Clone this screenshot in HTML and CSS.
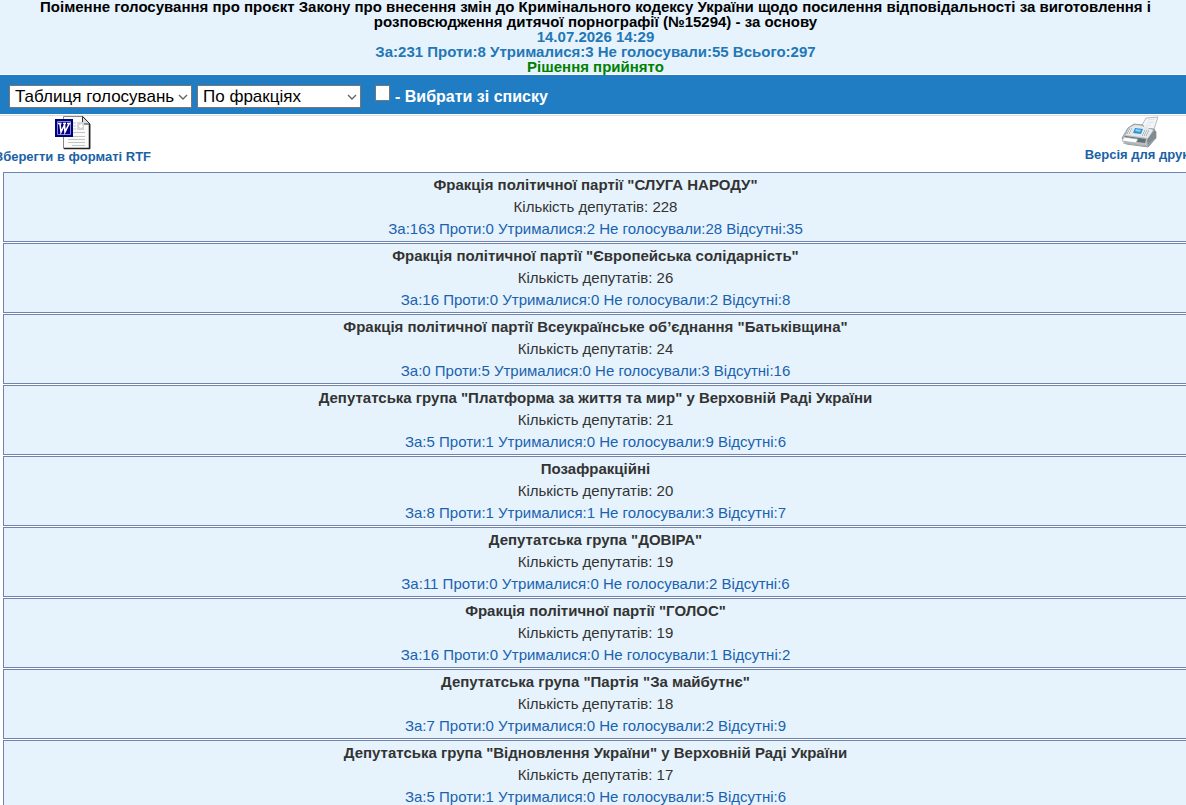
FILE: index.html
```
<!DOCTYPE html>
<html lang="uk">
<head>
<meta charset="utf-8">
<title>Поіменне голосування</title>
<link rel="stylesheet" href="styles.css">
</head>
<body>
<div class="page">
  <header class="summary">
    <h1 class="title">Поіменне голосування про проєкт Закону про внесення змін до Кримінального кодексу України щодо посилення відповідальності за виготовлення і розповсюдження дитячої порнографії (№15294) - за основу</h1>
    <div class="info">14.07.2026 14:29</div>
    <div class="info">За:231 Проти:8 Утрималися:3 Не голосували:55 Всього:297</div>
    <div class="result">Рішення прийнято</div>
  </header>
  <form class="toolbar">
    <span class="picker view">
      <select class="select" aria-label="Вигляд"><option>Таблиця голосувань</option></select>
      <svg class="chevron" width="10" height="6" viewBox="0 0 10 6"><path d="M1 1l4 4 4-4" fill="none" stroke="#666" stroke-width="1.4"/></svg>
    </span>
    <span class="picker group">
      <select class="select" aria-label="Групування"><option>По фракціях</option></select>
      <svg class="chevron" width="10" height="6" viewBox="0 0 10 6"><path d="M1 1l4 4 4-4" fill="none" stroke="#666" stroke-width="1.4"/></svg>
    </span>
    <input class="check" type="checkbox" id="from-list">
    <label class="check-label" for="from-list">- Вибрати зі списку</label>
  </form>
  <nav class="exports">
    <a class="export save" href="#rtf">
      <svg width="36" height="34" viewBox="0 0 36 34">
        <path d="M8.500 .5H28l7 7.500V32.500H8.500z" fill="#fafafa" stroke="#888"/>
        <path d="M9 32.500H34.500V8" fill="none" stroke="#222" stroke-width="1.500"/>
        <path d="M27.500 .5V8H35z" fill="#ddd" stroke="#333"/>
        <path d="M22 6h7v8h-7z" fill="#d4d4d4"/><path d="M24 10h4M26 8v4" stroke="#fff" stroke-width="1.500"/>
        <path d="M18 7h3M18 10h3M18 13h3M18 16.500h12M13 20.500h17M13 23.500h17M13 26.500h17M17 29.500h13" stroke="#c4c4c4"/>
        <path d="M1 4h16v16H1z" fill="#000080" stroke="#000080" stroke-width="2"/>
        <path d="M2.500 5.500h13v13h-13z" fill="none" stroke="#8c8cc8"/>
        <path d="M3 7.500h3.500M8 7.500h3M12 7.500h3.500M5 8l1 8 3.500-7 .5 7 4-8" fill="none" stroke="#fff" stroke-width="1.600"/>
      </svg>
      <span>Зберегти в форматі RTF</span>
    </a>
    <a class="export print" href="#print">
      <svg width="38" height="32" viewBox="0 0 38 32">
        <path d="M20 11l5-9 12-1-5 15z" fill="#f3f6f8" stroke="#b4bcc2"/>
        <path d="M27 4l7-1M26 7l7-1M24 10l6-1" stroke="#dce4e9"/>
        <path d="M1 22l6-10 6-4 9 1 1 3 10 1 2 3v6l-8 9-22-3z" fill="#b8c0c4" stroke="#788287" stroke-width=".7"/>
        <path d="M8 12l6-3 7 1 11 4-5 8-22-3z" fill="#e4e9eb"/>
        <path d="M33 14l2 2v6l-8 9-1-7z" fill="#818b90"/>
        <path d="M14 12l8 1-2 5-8-1z" fill="#2f91d8"/><path d="M15 13l5 1-1 2-5-1z" fill="#8bd0f5"/>
        <path d="M8 13h4M7 15h4M6 17h3M23 15h5M22 17h5M21 19h5" stroke="#85949c" stroke-dasharray="1 1"/>
        <path d="M4 20l21 3-1 4-22-3z" fill="#646f75"/>
        <path d="M3 21l14 2-2 4-14-2z" fill="#fff" stroke="#8d979c" stroke-width=".6"/>
        <path d="M2 27l24 3 8-7" fill="none" stroke="#a4adb2"/>
      </svg>
      <span>Версія для друку</span>
    </a>
  </nav>
  <main class="groups">
    <section class="group-card"><h2 class="name">Фракція політичної партії "СЛУГА НАРОДУ"</h2><p class="count">Кількість депутатів: 228</p><p class="votes">За:163 Проти:0 Утрималися:2 Не голосували:28 Відсутні:35</p></section>
    <section class="group-card"><h2 class="name">Фракція політичної партії "Європейська солідарність"</h2><p class="count">Кількість депутатів: 26</p><p class="votes">За:16 Проти:0 Утрималися:0 Не голосували:2 Відсутні:8</p></section>
    <section class="group-card"><h2 class="name">Фракція політичної партії Всеукраїнське об’єднання "Батьківщина"</h2><p class="count">Кількість депутатів: 24</p><p class="votes">За:0 Проти:5 Утрималися:0 Не голосували:3 Відсутні:16</p></section>
    <section class="group-card"><h2 class="name">Депутатська група "Платформа за життя та мир" у Верховній Раді України</h2><p class="count">Кількість депутатів: 21</p><p class="votes">За:5 Проти:1 Утрималися:0 Не голосували:9 Відсутні:6</p></section>
    <section class="group-card"><h2 class="name">Позафракційні</h2><p class="count">Кількість депутатів: 20</p><p class="votes">За:8 Проти:1 Утрималися:1 Не голосували:3 Відсутні:7</p></section>
    <section class="group-card"><h2 class="name">Депутатська група "ДОВІРА"</h2><p class="count">Кількість депутатів: 19</p><p class="votes">За:11 Проти:0 Утрималися:0 Не голосували:2 Відсутні:6</p></section>
    <section class="group-card"><h2 class="name">Фракція політичної партії "ГОЛОС"</h2><p class="count">Кількість депутатів: 19</p><p class="votes">За:16 Проти:0 Утрималися:0 Не голосували:1 Відсутні:2</p></section>
    <section class="group-card"><h2 class="name">Депутатська група "Партія "За майбутнє"</h2><p class="count">Кількість депутатів: 18</p><p class="votes">За:7 Проти:0 Утрималися:0 Не голосували:2 Відсутні:9</p></section>
    <section class="group-card"><h2 class="name">Депутатська група "Відновлення України" у Верховній Раді України</h2><p class="count">Кількість депутатів: 17</p><p class="votes">За:5 Проти:1 Утрималися:0 Не голосували:5 Відсутні:6</p></section>
  </main>
</div>
</body>
</html>
```
FILE: styles.css
```
body {
  margin: 0;
  overflow: hidden;
  background: #fff;
  color: #333;
  font: 15px/22px "Liberation Sans", Arial, sans-serif;
}
.page { margin-right: -5px; }
.summary {
  margin-top: -1px;
  padding: 0 16px;
  background: #e6f3fd;
  font-weight: bold;
  line-height: 15px;
  text-align: center;
}
.title { margin: 0; color: #000; font-size: 15px; }
.info { color: #2377b5; }
.result { color: #008000; }
.toolbar {
  display: flex;
  align-items: center;
  margin-top: 1px;
  padding: 10px 9px 6px;
  background: #207cc3;
}
.picker { display: grid; align-items: center; margin-right: 5px; }
.view { width: 183px; }
.group { width: 164px; }
.select, .chevron { grid-area: 1 / 1; }
.select {
  appearance: none;
  width: 100%;
  height: 23px;
  padding: 0 5px;
  border: 1px solid #767676;
  border-radius: 0;
  background: #fff;
  color: #000;
  font: 17px "Liberation Sans", Arial, sans-serif;
}
.chevron { justify-self: end; margin-right: 4px; pointer-events: none; }
.check {
  appearance: none;
  align-self: flex-start;
  width: 15px;
  height: 16px;
  margin: 0 5px 0 9px;
  border: 1px solid #767676;
  background: #fff;
}
.check:checked { background: #2377b5; }
.check-label { color: #fff; font-size: 16px; font-weight: bold; }
.exports {
  display: flex;
  justify-content: space-between;
  margin-top: 1px;
  height: 56px;
  border-top: 1px solid #ddd;
}
.export {
  display: flex;
  flex-direction: column;
  align-items: center;
  color: #1a62a5;
  font-size: 13px;
  font-weight: bold;
  line-height: 13px;
  text-decoration: none;
  white-space: nowrap;
}
.save { margin-left: -5px; }
.print { margin-right: -5px; }
.export svg { display: block; }
.groups { display: flex; flex-direction: column; gap: 1px; padding: 0 3px; }
.group-card {
  padding: 1px 0;
  border: 1px solid #7084ad;
  background: #e6f3fd;
  text-align: center;
}
.name, .count, .votes { margin: 0; font-size: 15px; }
.name { font-weight: bold; }
.votes { color: #1a62ae; }
```
